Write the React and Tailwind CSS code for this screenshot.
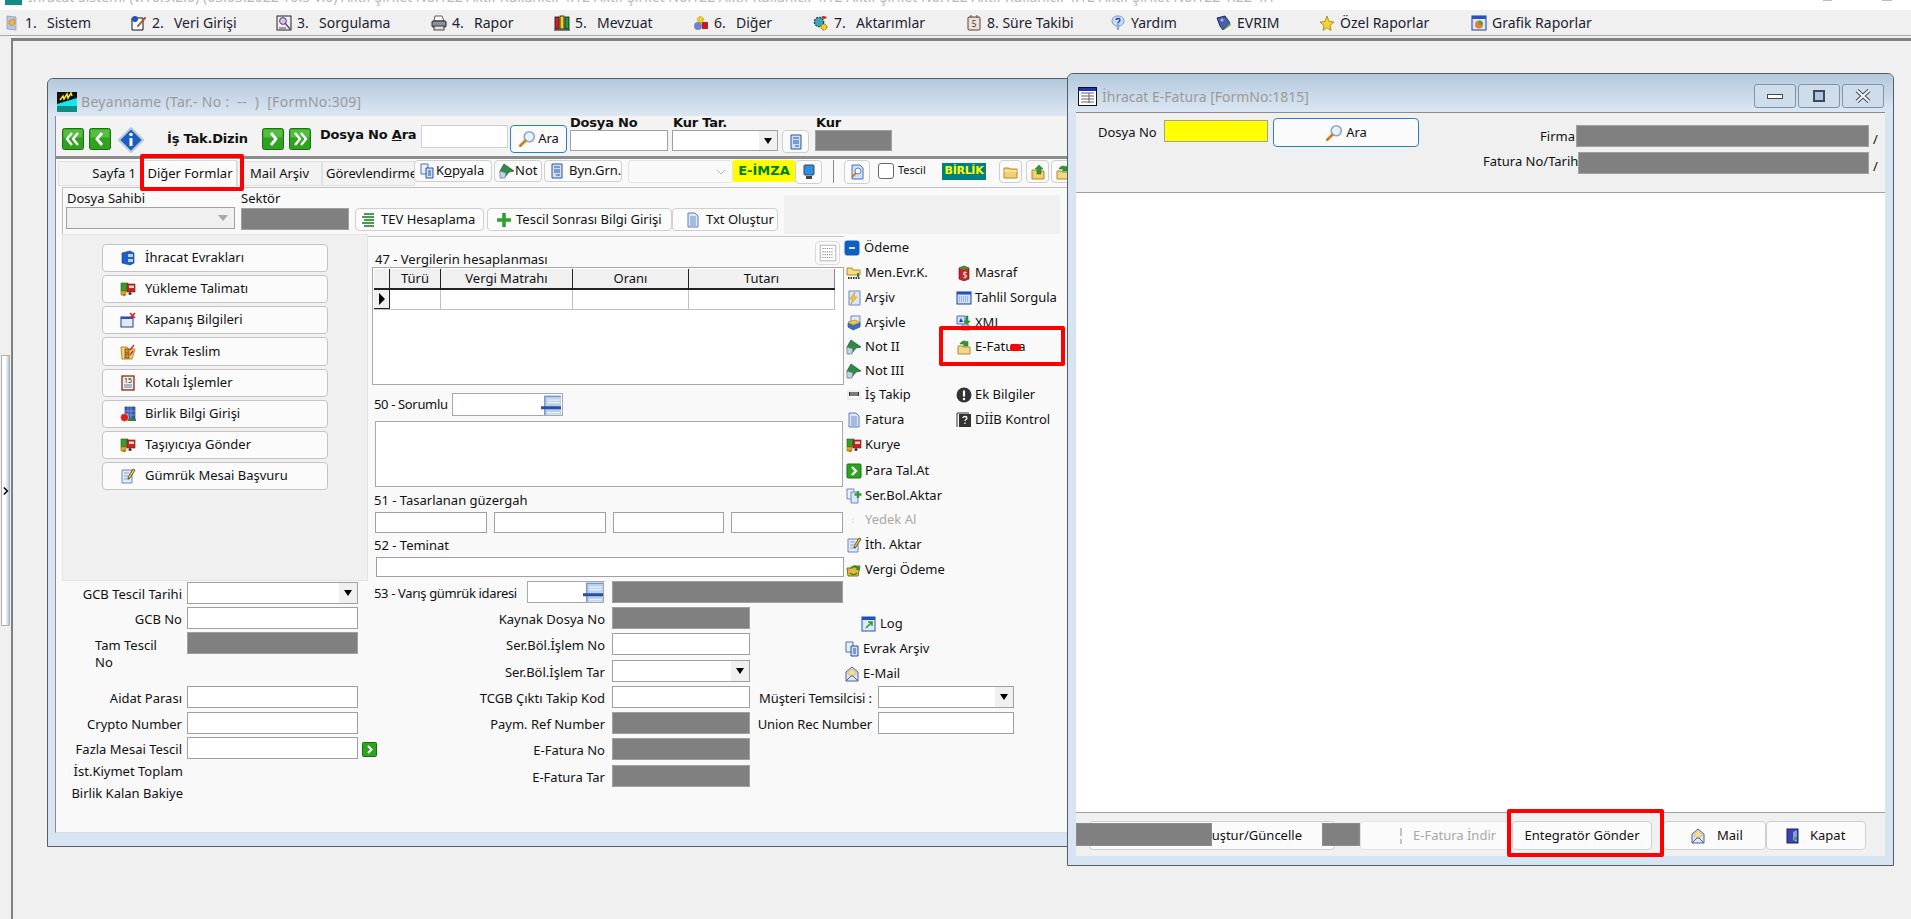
import React from "react";

const S = ({ children, s = 16, className = "" }) => (
  <svg width={s} height={s} viewBox="0 0 16 16" className={"shrink-0 " + className}>
    {children}
  </svg>
);

// small raster-like toolbar icons
const Docu = () => (
  <S>
    <path d="M3 1h7l3 3v11H3z" fill="#dbe6f6" stroke="#5f7fb8" />
    <path d="M5 5h6M5 7h6M5 9h6M5 11h6M5 13h6" stroke="#6f8fc8" />
  </S>
);
const DocBlue = () => (
  <S>
    <path d="M3 1h10v14H3z" fill="#cfe0f8" stroke="#2a50a0" />
    <path d="M5 4h6M5 7h6M5 9h6M7 12h4" stroke="#2a50a0" />
  </S>
);
const Folder = () => (
  <S>
    <path d="M1 4h5l1 1h7v9H1z" fill="#f2cf72" stroke="#b5882a" />
    <path d="M1 7h13" stroke="#fff2c0" />
  </S>
);
const FolderUp = () => (
  <S>
    <path d="M2 6h4l1 1h7v8H2z" fill="#f2cf72" stroke="#b5882a" />
    <path d="M9 1l4 4h-2v5H7V5H5z" fill="#2f9a2f" stroke="#1c6c1c" strokeWidth=".5" />
  </S>
);
const FolderArrow = () => (
  <S>
    <path d="M2 7h4l1 1h7v7H2z" fill="#f2d88a" stroke="#b5882a" />
    <path d="M4 5c1-3 5-4 7-2l1-1v5H7l2-1c-1-1-3-1-5-1z" fill="#2f9a2f" stroke="#1c6c1c" strokeWidth=".5" />
  </S>
);
const Book = () => (
  <S>
    <path d="M1 8l4-7 10 7-5 1-4 5-4 1z" fill="#2f8a4a" stroke="#17592b" strokeWidth=".7" />
    <path d="M1 8v7h5l1-5z" fill="#c3d3e3" stroke="#6c7f95" strokeWidth=".7" />
  </S>
);
const Copy = () => (
  <S>
    <path d="M2 1h7v10H2z" fill="#e8f0fb" stroke="#4a70b8" />
    <path d="M7 5h7v10H7z" fill="#cfe0f8" stroke="#2a50a0" />
    <path d="M9 8h3M9 10h3M9 12h3" stroke="#2a50a0" />
  </S>
);
const Mag = ({ s = 18 }) => (
  <S s={s}>
    <circle cx="10" cy="6" r="4.500" fill="#e4f0fb" stroke="#8da8c0" strokeWidth="1.400" />
    <path d="M6.500 9.500L2 14" stroke="#d27a1e" strokeWidth="2.400" strokeLinecap="round" />
  </S>
);
const Truck = () => (
  <S>
    <rect x="1" y="2" width="7" height="8" fill="#3b9a2c" stroke="#1e651a" strokeWidth=".6" />
    <rect x="7" y="3" width="8" height="8" fill="#c82420" stroke="#7e1512" strokeWidth=".6" />
    <rect x="9" y="4.500" width="5" height="2.500" fill="#f3d6d4" />
    <rect x="1" y="10" width="5" height="4" fill="#e0a82a" stroke="#96701a" strokeWidth=".6" />
    <circle cx="10" cy="12.500" r="1.500" fill="#333" />
    <circle cx="4" cy="14" r="1.200" fill="#a5761a" />
  </S>
);
const Mail = () => (
  <S>
    <path d="M2 6l6-5 6 5v9H2z" fill="#dbe6f6" stroke="#4a5f96" />
    <path d="M4 6l4-3 4 3v2l-4 2-4-2z" fill="#f3dc95" stroke="#c0a050" strokeWidth=".5" />
    <path d="M2 15l5-5h2l5 5" fill="none" stroke="#4a5f96" />
  </S>
);
const PenNote = () => (
  <S>
    <path d="M2 2h10v13H2z" fill="#dfe9f7" stroke="#6d89b6" />
    <path d="M4 5h5M4 8h4M4 11h6" stroke="#8ba3c6" />
    <path d="M13 1l2 1-5 8-2 1 .4-2.400z" fill="#f2d22a" stroke="#222" strokeWidth=".7" />
  </S>
);
const Lookup = () => (
  <S s={20}>
    <rect x="3" y="1" width="14" height="18" fill="#b9d1ee" stroke="#6f8fc0" />
    <path d="M5 4h10M5 6h10M5 14h10M5 16h10" stroke="#eef4fb" />
    <rect x="0" y="9" width="20" height="2.400" fill="#2c4fa0" />
  </S>
);
const GreenBtn = ({ kind, className = "" }) => (
  <svg width="22" height="22" viewBox="0 0 22 22" className={"shrink-0 " + className}>
    <rect x=".5" y=".5" width="21" height="21" rx="2" fill="#2fa31f" stroke="#1b7010" />
    <rect x="1.500" y="1.500" width="19" height="8" rx="1" fill="#6fce55" opacity=".6" />
    {kind === "l2" && <path d="M10 5l-5 6 5 6M16 5l-5 6 5 6" fill="none" stroke="#fff" strokeWidth="2.400" />}
    {kind === "l" && <path d="M13 5l-5 6 5 6" fill="none" stroke="#fff" strokeWidth="2.800" />}
    {kind === "r" && <path d="M9 5l5 6-5 6" fill="none" stroke="#fff" strokeWidth="2.800" />}
    {kind === "r2" && <path d="M6 5l5 6-5 6M12 5l5 6-5 6" fill="none" stroke="#fff" strokeWidth="2.400" />}
  </svg>
);
const Monitor = () => (
  <S>
    <rect x="3" y="1" width="10" height="10" rx="1" fill="#2a8fe8" stroke="#444" />
    <rect x="5" y="12" width="6" height="3" fill="#444" />
  </S>
);

const menuIcons = {
  sistem: (
    <S>
      <path d="M3 1l9 1v13l-9-1z" fill="#b9c8e0" stroke="#7a8cab" strokeWidth=".6" />
      <path d="M5 6l5-2 1 4-3 3-3-2z" fill="#f2b82e" stroke="#b27f14" strokeWidth=".6" />
    </S>
  ),
  veri: (
    <S>
      <path d="M1 3h11v12H1z" fill="#fff" stroke="#111" />
      <circle cx="4" cy="4" r="3" fill="#2a50c0" />
      <path d="M6 11L14 2l1 1-8 9z" fill="#c8622a" stroke="#6a2f10" strokeWidth=".5" />
    </S>
  ),
  sorgu: (
    <S>
      <rect x="1" y="1" width="14" height="14" fill="#eee" stroke="#222" />
      <circle cx="7" cy="6" r="3.400" fill="#d9c4e8" stroke="#5a3a7a" />
      <path d="M9 8l5 6M3 13h7" stroke="#5a3a7a" strokeWidth="1.200" />
    </S>
  ),
  rapor: (
    <S>
      <path d="M4 1h7l2 5H3z" fill="#fff" stroke="#333" strokeWidth=".8" />
      <rect x="1" y="6" width="14" height="6" rx="1" fill="#8c9296" stroke="#222" />
      <rect x="3" y="11" width="10" height="4" fill="#ddd" stroke="#222" strokeWidth=".8" />
    </S>
  ),
  mevzuat: (
    <S>
      <rect x="1" y="2" width="4" height="12" fill="#d82020" stroke="#111" strokeWidth=".8" />
      <rect x="6" y="1" width="4" height="13" fill="#f0d020" stroke="#111" strokeWidth=".8" />
      <rect x="11" y="2" width="4" height="12" fill="#20a040" stroke="#111" strokeWidth=".8" />
      <path d="M0 15h16" stroke="#111" />
    </S>
  ),
  diger: (
    <S>
      <path d="M7 1l4 3-2 4H6L4 4z" fill="#f2d020" stroke="#a58a10" strokeWidth=".5" />
      <rect x="9" y="7" width="6" height="7" fill="#c02020" />
      <circle cx="5" cy="11" r="4" fill="#7a80c8" />
    </S>
  ),
  aktar: (
    <S>
      <circle cx="6" cy="7" r="4.600" fill="#3aa8b8" stroke="#10505a" strokeWidth="1.400" strokeDasharray="2 1" />
      <path d="M8 2c2-2 5-1 6 1l-3 1z" fill="#d82020" />
      <circle cx="11" cy="12" r="3" fill="#f0d020" stroke="#6a5a10" strokeDasharray="1.400 .8" />
    </S>
  ),
  sure: (
    <S>
      <rect x="2" y="2" width="12" height="13" rx="1" fill="#e8e2dc" stroke="#6a3a34" />
      <path d="M5 0v3M11 0v3" stroke="#555" />
      <text x="8" y="12" fontSize="8" textAnchor="middle" fill="#333">5</text>
    </S>
  ),
  yardim: (
    <S>
      <path d="M8 1c4 0 6 2 6 5s-3 5-5 5l-1 4-1-4c-2 0-5-2-5-5s2-5 6-5z" fill="#c8dcf6" stroke="#7898c8" />
      <path d="M6 5c0-2 4-2 4 0 0 2-2 1.600-2 3.500M8 9.500v1" fill="none" stroke="#1e3f9a" strokeWidth="1.300" />
    </S>
  ),
  evrim: (
    <S>
      <path d="M1 3l8-2 5 7-7 7-3-4z" fill="#4a5fa8" stroke="#222a60" />
      <path d="M7 15l7-7 1 2-7 5z" fill="#6ab04a" />
      <circle cx="6" cy="5" r="1.500" fill="#9ac0f0" />
    </S>
  ),
  star: (
    <S>
      <path d="M8 1l2 5.500 5 .5-4 3.500 1 5-4-2.800L4 15.500l1-5-4-3.500 5-.5z" fill="#f6d432" stroke="#b8901a" />
    </S>
  ),
  grafik: (
    <S>
      <rect x="1" y="1" width="14" height="14" fill="#dfe8f8" stroke="#1e3f9a" />
      <rect x="1" y="1" width="14" height="3" fill="#2a50c0" />
      <circle cx="8" cy="9.500" r="4" fill="#e8802a" />
      <path d="M8 9.500V5.500a4 4 0 0 1 4 4z" fill="#3aa84a" />
    </S>
  ),
};

const menu = [
  { w: "w-[127px]", icon: menuIcons.sistem, n: "1.", t: "Sistem" },
  { w: "w-[145px]", icon: menuIcons.veri, n: "2.", t: "Veri Girişi" },
  { w: "w-[155px]", icon: menuIcons.sorgu, n: "3.", t: "Sorgulama" },
  { w: "w-[123px]", icon: menuIcons.rapor, n: "4.", t: "Rapor" },
  { w: "w-[139px]", icon: menuIcons.mevzuat, n: "5.", t: "Mevzuat" },
  { w: "w-[120px]", icon: menuIcons.diger, n: "6.", t: "Diğer" },
  { w: "w-[153px]", icon: menuIcons.aktar, n: "7.", t: "Aktarımlar" },
  { w: "w-[144px]", icon: menuIcons.sure, t: "8. Süre Takibi" },
  { w: "w-[106px]", icon: menuIcons.yardim, t: "Yardım" },
  { w: "w-[103px]", icon: menuIcons.evrim, t: "EVRIM" },
  { w: "w-[152px]", icon: menuIcons.star, t: "Özel Raporlar" },
  { w: "w-[130px]", icon: menuIcons.grafik, t: "Grafik Raporlar" },
];

const Input = ({ className = "" }) => <div className={"h-[22px] bg-white border border-[#a0a0a0] shrink-0 " + className} />;
const Gray = ({ className = "" }) => <div className={"h-[22px] bg-[#808080] border border-[#a0a0a0] shrink-0 " + className} />;
const Combo = ({ className = "" }) => (
  <div className={"h-[22px] bg-white border border-[#a0a0a0] shrink-0 flex justify-end " + className}>
    <div className="w-[18px] bg-[#f0f0f0] flex items-center justify-center">
      <div className="w-0 h-0 border-x-[4px] border-x-transparent border-t-[6px] border-t-black" />
    </div>
  </div>
);
const Btn = ({ children, className = "" }) => (
  <div className={"flex items-center bg-[#fbfbfb] border border-[#cfcfcf] rounded-[4px] shrink-0 " + className}>{children}</div>
);

const sideButtons = [
  { h: "h-[28px]", icon: (
    <S>
      <path d="M2 3l8-2 4 2v10l-4 2-8-2z" fill="#1e5fc8" stroke="#123a80" strokeWidth=".6" />
      <rect x="8" y="4" width="5" height="3" fill="#b8d0f0" /><rect x="8" y="9" width="5" height="3" fill="#b8d0f0" />
    </S>
  ), t: "İhracat Evrakları" },
  { h: "h-[28px]", icon: <Truck />, t: "Yükleme Talimatı" },
  { h: "h-[28px]", icon: (
    <S>
      <rect x="1" y="5" width="12" height="10" fill="#dfeafa" stroke="#1e3f9a" />
      <rect x="1" y="5" width="12" height="2" fill="#2a50c0" />
      <path d="M10 1l5 5M15 1l-5 5" stroke="#d82020" strokeWidth="1.600" />
    </S>
  ), t: "Kapanış Bilgileri" },
  { h: "h-[29px]", icon: (
    <S>
      <path d="M1 3h6l1 2h7l-3 10H2z" fill="#f4d468" stroke="#b5882a" />
      <rect x="5" y="5" width="4" height="4" fill="#e8841e" stroke="#333" strokeWidth=".6" />
      <rect x="5" y="10" width="4" height="4" fill="#e8841e" stroke="#333" strokeWidth=".6" />
      <path d="M10 6l4-5M10 11l3-4" stroke="#d82020" strokeWidth="1.300" />
    </S>
  ), t: "Evrak Teslim" },
  { h: "h-[28px]", icon: (
    <S>
      <rect x="2" y="1" width="12" height="14" fill="#f3ece4" stroke="#8a3a2a" strokeWidth="1.400" />
      <text x="8" y="8" fontSize="7" textAnchor="middle" fill="#222">15</text>
      <path d="M4 10h8M4 12h8" stroke="#6a80a8" />
    </S>
  ), t: "Kotalı İşlemler" },
  { h: "h-[28px]", icon: (
    <S>
      <rect x="5" y="1" width="10" height="12" fill="#3a5ab0" stroke="#1e2f70" strokeWidth=".6" />
      <path d="M8 1v12M11 1v12M5 5h10M5 9h10" stroke="#8aa8e0" strokeWidth=".7" />
      <path d="M6 13h10v2H6z" fill="#2a8a2a" />
      <circle cx="4.500" cy="11.500" r="4" fill="#d82020" stroke="#fff" strokeWidth=".5" />
    </S>
  ), t: "Birlik Bilgi Girişi" },
  { h: "h-[28px]", icon: <Truck />, t: "Taşıyıcıya Gönder" },
  { h: "h-[28px]", icon: <PenNote />, t: "Gümrük Mesai Başvuru" },
];

const LabelRow = ({ label, children }) => (
  <div className="flex items-start h-[22px]">
    <span className="w-[121px] h-[22px] leading-[25px] shrink-0 text-right pr-[1px] whitespace-nowrap">{label}</span>
    {children}
  </div>
);
const MidRow = ({ label, field, extra, className = "" }) => (
  <div className={"flex items-start w-max h-[22px] " + className}>
    <span className="w-[237px] h-[22px] leading-[25px] shrink-0 text-right whitespace-nowrap">{label}</span>
    <div className="ml-[7px] w-[138px]">{field}</div>
    {extra}
  </div>
);

const Tool = ({ icon, t, h, gray = false, className = "" }) => (
  <div className={"flex items-center shrink-0 " + h + " " + className}>
    {icon}
    <span className={"ml-[3px] whitespace-nowrap " + (gray ? "text-[#a8a8a8]" : "")}>{t}</span>
  </div>
);

const leftTools = [
  { h: "h-[25px]", t: "Men.Evr.K.", icon: (
    <S>
      <path d="M1 3h5l1 2h7v5H1z" fill="#f6dc80" stroke="#b5882a" />
      <path d="M2 13h12" stroke="#333" strokeWidth="2" strokeDasharray="1.500 1" />
      <path d="M12 8v4" stroke="#2a8a2a" strokeWidth="2" />
    </S>
  ), side: { t: "Masraf", icon: (
    <S>
      <path d="M3 3l5-2 5 2v11l-5 2-5-2z" fill="#c82420" stroke="#5a1010" strokeWidth=".6" />
      <path d="M3 3l5-2 5 2-5 2z" fill="#3a9a2c" />
      <text x="9" y="13" fontSize="8" textAnchor="middle" fill="#fff">$</text>
    </S>
  ) } },
  { h: "h-[25px]", t: "Arşiv", icon: (
    <S>
      <path d="M3 1h11v14H3z" fill="#dbe6f6" stroke="#6d89b6" />
      <path d="M9 2L4 9h3l-2 5 6-7H8z" fill="#f2d020" stroke="#c0801a" strokeWidth=".5" />
    </S>
  ), side: { t: "Tahlil Sorgula", icon: (
    <S>
      <rect x="1" y="2" width="14" height="12" fill="#cfe0f8" stroke="#1e3f9a" />
      <rect x="1" y="2" width="14" height="2.500" fill="#1e50c0" />
      <path d="M3 7h10M3 9h10M3 11h10" stroke="#6f8fc8" strokeDasharray="1 1" />
    </S>
  ) } },
  { h: "h-[25px]", t: "Arşivle", icon: (
    <S>
      <path d="M5 1h9v9H5z" fill="#e4ecf8" stroke="#6d89b6" />
      <path d="M2 7l7-2 5 2-7 3z" fill="#f2c84a" stroke="#a5801a" strokeWidth=".6" />
      <path d="M2 8l5 3 7-3v4l-7 3-5-3z" fill="#3a70c8" stroke="#1e3f80" strokeWidth=".6" />
    </S>
  ), side: { t: "XML", icon: (
    <S>
      <path d="M1 1h8v8H1z" fill="#cfe0f8" stroke="#4a70b8" />
      <path d="M3 7l2-4 2 4z" fill="#1e3f9a" />
      <path d="M10 1v5H8l3 4 3-4h-2V1z" fill="#2f9a2f" stroke="#1c6c1c" strokeWidth=".5" />
      <rect x="6" y="10" width="7" height="5" fill="#dbe6f6" stroke="#6d89b6" />
    </S>
  ) } },
  { h: "h-[24px]", t: "Not II", icon: <Book />, side: { t: "E-Fatura", icon: <FolderArrow /> } },
  { h: "h-[23px]", t: "Not III", icon: <Book /> },
  { h: "h-[25px]", t: "İş Takip", icon: (
    <S>
      <rect x="2" y="4" width="12" height="8" fill="#fff" stroke="#ccc" strokeWidth=".6" />
      <path d="M3 5h10v4H3z" fill="#333" />
      <path d="M5 5v4M7 5v4M9 5v4M11 5v4" stroke="#fff" strokeWidth=".7" />
    </S>
  ), side: { t: "Ek Bilgiler", icon: (
    <S>
      <circle cx="8" cy="8" r="7.500" fill="#333" />
      <path d="M8 3.500v6" stroke="#fff" strokeWidth="2.200" />
      <circle cx="8" cy="12" r="1.200" fill="#fff" />
    </S>
  ) } },
  { h: "h-[25px]", t: "Fatura", icon: <Docu />, side: { t: "DİİB Kontrol", icon: (
    <S>
      <rect x="3" y="2" width="12" height="13" fill="#333" />
      <path d="M1 1h12M1 1v14" stroke="#333" fill="none" />
      <path d="M7 6c0-2 4-2 4 0 0 1.500-2 1.500-2 3M9 10.500v1.500" fill="none" stroke="#fff" strokeWidth="1.300" />
    </S>
  ) } },
  { h: "h-[26px]", t: "Kurye", icon: <Truck /> },
  { h: "h-[26px]", t: "Para Tal.At", icon: (
    <S>
      <rect x="1" y="1" width="14" height="14" rx="1" fill="#2fa31f" stroke="#1b7010" />
      <path d="M6 4l4 4-4 4" fill="none" stroke="#fff" strokeWidth="2.200" />
    </S>
  ) },
  { h: "h-[23px]", t: "Ser.Bol.Aktar", icon: (
    <S>
      <path d="M1 1h7v10H1z" fill="#e8f0fb" stroke="#6d89b6" />
      <path d="M5 4h7v11H5z" fill="#dbe6f6" stroke="#6d89b6" />
      <path d="M12 3v7M8.500 6.500h7" stroke="#2f9a3f" strokeWidth="2.400" />
    </S>
  ) },
  { h: "h-[25px]", t: "Yedek Al", gray: true, icon: (
    <S>
      <path d="M7 6.500v1.200M7 9.500v1.200" stroke="#b8b8b8" />
    </S>
  ) },
  { h: "h-[25px]", t: "İth. Aktar", icon: <PenNote /> },
  { h: "h-[25px]", t: "Vergi Ödeme", icon: (
    <S>
      <path d="M1 6h6l1-2h6l-2 10H2z" fill="#e8b83a" stroke="#8a6a14" />
      <path d="M3 8c2-3 6-3 8-1l-2 1h5l-1-4-1 1c-3-3-8-1-9 3z" fill="#2f8a2f" />
      <path d="M4 11c2 2 5 2 7 0" stroke="#2f8a2f" strokeWidth="1.600" fill="none" />
    </S>
  ) },
];

const boldLabel = "font-['DejaVu_Sans'] font-bold text-[13px] tracking-[-.2px] text-[#111]";

const Beyanname = () => (
  <div className="absolute left-[47px] top-[78px] w-[1040px] h-[769px] border border-[#555d66] rounded-t-md bg-[#d7e4f2] flex flex-col">
    {/* title */}
    <div className="h-[37px] shrink-0 flex items-center pl-[9px] pt-[8px] rounded-t-md bg-gradient-to-b from-[#b4c8dc] to-[#dbe7f3] text-[14px] text-[#9a9a9a] tracking-[.3px]">
      <svg width="20" height="20" viewBox="0 0 20 20" className="shrink-0">
        <rect width="20" height="14" fill="#111" />
        <path d="M0 12L20 6v8H0z" fill="#14e6f0" />
        <rect y="14" width="20" height="6" fill="#0f8c84" />
        <path d="M3 8l3-4 1 3 3-5 1 4 3-5 1 3" fill="none" stroke="#f6e62a" strokeWidth="1.500" />
      </svg>
      <span className="ml-[4px] whitespace-pre">Beyanname (Tar.- No :  --  )  [FormNo:309]</span>
    </div>
    <div className="ml-[7px] h-[717px] shrink-0 bg-[#f9f9f9] border-l border-b border-l-[#8c8c8c] border-b-[#dcdcdc] flex flex-col">
      {/* toolbar */}
      <div className="h-[40px] shrink-0 bg-[#f3f3f3] flex items-start pl-[6px]">
        <GreenBtn kind="l2" className="mt-[12px]" />
        <GreenBtn kind="l" className="mt-[12px] ml-[5px]" />
        <svg width="26" height="26" viewBox="0 0 26 26" className="mt-[11px] ml-[7px] shrink-0">
          <path d="M13 1l12 12-12 12L1 13z" fill="#1a5cc0" stroke="#b8c8e0" strokeWidth="2" />
          <circle cx="13" cy="7.500" r="1.800" fill="#fff" />
          <path d="M13 11v8" stroke="#fff" strokeWidth="3" />
        </svg>
        <span className={"mt-[13px] ml-[23px] w-[95px] whitespace-nowrap " + boldLabel}>İş Tak.Dizin</span>
        <GreenBtn kind="r" className="mt-[12px]" />
        <GreenBtn kind="r2" className="mt-[12px] ml-[5px]" />
        <span className={"mt-[9px] ml-[9px] w-[101px] whitespace-nowrap " + boldLabel}>Dosya No <u>A</u>ra</span>
        <div className="mt-[9px] w-[87px] h-[23px] bg-white border border-[#d0d0d0] shrink-0" />
        <Btn className="mt-[9px] ml-[2px] w-[57px] h-[28px] !border-[#2a80c8] justify-center">
          <Mag />
          <span className="ml-[2px]">Ara</span>
        </Btn>
        <div className="ml-[3px] w-[98px] shrink-0">
          <div className={"h-[14px] leading-[14px] whitespace-nowrap " + boldLabel}>Dosya No</div>
          <Input className="w-[98px] !h-[21px]" />
        </div>
        <div className="ml-[4px] w-[106px] shrink-0">
          <div className={"h-[14px] leading-[14px] pl-[1px] " + boldLabel}>Kur Tar.</div>
          <Combo className="w-[106px] !h-[21px]" />
        </div>
        <Btn className="mt-[14px] ml-[4px] w-[27px] h-[23px] justify-center">
          <DocBlue />
        </Btn>
        <div className="ml-[6px] w-[77px] shrink-0">
          <div className={"h-[14px] leading-[14px] pl-[1px] " + boldLabel}>Kur</div>
          <Gray className="w-[77px] !h-[21px]" />
        </div>
      </div>
      {/* tabs */}
      <div className="h-[31px] shrink-0 border-t-[3px] border-[#8c8c8c] flex items-start pl-[2px] pt-[1px] bg-[#f9f9f9]">
        <div className="w-[85px] h-[25px] mt-[1px] bg-[#f3f3f3] border border-[#e0e0e0] flex items-center justify-end pr-[6px]">Sayfa 1</div>
        <div className="w-[94px] h-[26px] bg-[#fafafa] border border-[#d8d8d8] border-b-0 flex items-center justify-center">Diğer Formlar</div>
        <div className="w-[85px] h-[25px] mt-[1px] bg-[#f3f3f3] border border-[#e0e0e0] flex items-center justify-center">Mail Arşiv</div>
        <div className="w-[93px] h-[25px] mt-[1px] pl-[3px] bg-[#f3f3f3] border border-[#e0e0e0] overflow-hidden whitespace-nowrap flex items-center">Görevlendirme</div>
        <Btn className="w-[78px] h-[22px] -ml-[1px] pl-[4px]"><Copy /><span className="ml-[1px]">K<u>o</u>pyala</span></Btn>
        <Btn className="w-[48px] h-[22px] ml-[2px] pl-[4px]"><Book /><span>Not</span></Btn>
        <Btn className="w-[78px] h-[22px] ml-[2px] pl-[4px]"><DocBlue /><span className="ml-[4px]">Byn.Grn.</span></Btn>
        <div className="w-[105px] h-[23px] ml-[6px] bg-[#f9f9f9] border border-[#e4e4e4] rounded-[3px] flex items-center justify-end pr-[6px]">
          <svg width="10" height="6" viewBox="0 0 10 6"><path d="M1 1l4 4 4-4" fill="none" stroke="#b8b8b8" /></svg>
        </div>
        <div className="w-[62px] h-[22px] bg-[#ffff00] text-[#008000] flex items-center justify-center font-['DejaVu_Sans'] font-bold text-[13px]">E-İMZA</div>
        <Btn className="w-[27px] h-[24px] justify-center"><Monitor /></Btn>
        <div className="w-px h-[23px] ml-[11px] bg-[#888] shrink-0" />
        <Btn className="w-[26px] h-[24px] ml-[10px] justify-center">
          <S>
            <path d="M3 1h8l3 3v11H3z" fill="#cfe0f8" stroke="#4a70b8" />
            <circle cx="9" cy="7" r="3" fill="#f4f8fd" stroke="#5a80b8" />
            <path d="M7 9l-4 4" stroke="#d27a1e" strokeWidth="2" />
          </S>
        </Btn>
        <div className="w-[16px] h-[16px] ml-[8px] mt-[3px] bg-white border border-[#666] rounded-[3px] shrink-0" />
        <span className="ml-[4px] mt-[2px] w-[44px] text-[11px]">Tescil</span>
        <div className="w-[44px] h-[17px] mt-[3px] bg-[#008080] text-[#ffff00] flex items-center justify-center font-['DejaVu_Sans'] font-bold text-[11px] tracking-[-.3px] shrink-0">BİRLİK</div>
        <Btn className="w-[23px] h-[23px] ml-[13px] justify-center"><Folder /></Btn>
        <Btn className="w-[23px] h-[23px] ml-[4px] justify-center"><FolderUp /></Btn>
        <Btn className="w-[23px] h-[23px] ml-[2px] justify-center"><FolderArrow /></Btn>
      </div>
      {/* header of page */}
      <div className="h-[47px] shrink-0 ml-[6px] border-t border-l border-[#c0c0c0] flex items-start bg-[#f9f9f9]">
        <div className="ml-[3px] w-[169px] shrink-0">
          <div className="h-[19px] leading-[20px] pl-[1px]">Dosya Sahibi</div>
          <div className="h-[22px] bg-[#f0f0f0] border border-[#a0a0a0] flex items-center justify-end pr-[6px]">
            <div className="w-0 h-0 border-x-[5px] border-x-transparent border-t-[6px] border-t-[#a8a8a8]" />
          </div>
        </div>
        <div className="ml-[6px] w-[108px] shrink-0">
          <div className="h-[20px] leading-[20px]">Sektör</div>
          <Gray className="w-[108px]" />
        </div>
        <Btn className="mt-[20px] ml-[6px] w-[129px] h-[23px] pl-[5px]">
          <svg width="16" height="16" viewBox="0 0 16 16" className="shrink-0"><path d="M3 2h10M1 5h12M3 8h10M1 11h12M3 14h10" stroke="#4a9a50" strokeWidth="1.800" /></svg>
          <span className="ml-[4px] whitespace-nowrap">TEV Hesaplama</span>
        </Btn>
        <Btn className="mt-[20px] ml-[3px] w-[185px] h-[23px] pl-[8px]">
          <svg width="16" height="16" viewBox="0 0 16 16" className="shrink-0"><path d="M8 1v14M1 8h14" stroke="#2fa02f" strokeWidth="3.600" /></svg>
          <span className="ml-[4px] whitespace-nowrap">Tescil Sonrası Bilgi Girişi</span>
        </Btn>
        <Btn className="mt-[20px] w-[106px] h-[23px] pl-[12px]">
          <Docu />
          <span className="ml-[5px] whitespace-nowrap">Txt Oluştur</span>
        </Btn>
        <div className="mt-[7px] ml-[6px] w-[276px] h-[39px] bg-[#f0f0f0] shrink-0" />
      </div>
      {/* body */}
      <div className="flex flex-1 ml-[6px] items-start min-h-0">
        <div className="w-[306px] shrink-0">
          <div className="h-[347px] bg-[#f0f0f0] border border-[#e4e4e4] pt-[9px] pl-[39px] flex flex-col gap-[3px]">
            {sideButtons.map((b) => (
              <Btn key={b.t} className={"w-[226px] pl-[17px] !border-[#c4c4c4] " + b.h}>
                {b.icon}
                <span className="ml-[9px] whitespace-nowrap">{b.t}</span>
              </Btn>
            ))}
          </div>
          <div className="flex flex-col">
            <div className="mt-[1px]">
              <LabelRow label="GCB Tescil Tarihi"><Combo className="ml-[4px] w-[171px]" /></LabelRow>
            </div>
            <div className="mt-[3px]">
              <LabelRow label="GCB No"><Input className="ml-[4px] w-[171px]" /></LabelRow>
            </div>
            <div className="mt-[3px] h-[22px] flex items-start">
              <span className="w-[121px] shrink-0 pl-[33px] pt-[5px] leading-[17px]">Tam Tescil<br />No</span>
              <Gray className="ml-[4px] w-[171px]" />
            </div>
            <div className="mt-[32px]">
              <LabelRow label="Aidat Parası"><Input className="ml-[4px] w-[171px]" /></LabelRow>
            </div>
            <div className="mt-[4px]">
              <LabelRow label="Crypto Number"><Input className="ml-[4px] w-[171px]" /></LabelRow>
            </div>
            <div className="mt-[3px]">
              <LabelRow label="Fazla Mesai Tescil">
                <Input className="ml-[4px] w-[171px]" />
                <svg width="15" height="15" viewBox="0 0 15 15" className="ml-[4px] mt-[5px] shrink-0">
                  <rect x=".5" y=".5" width="14" height="14" rx="1" fill="#2fa31f" stroke="#1b7010" />
                  <path d="M6 4l3.500 3.500L6 11" fill="none" stroke="#fff" strokeWidth="2" />
                </svg>
              </LabelRow>
            </div>
            <div className="mt-[2px] h-[20px] leading-[20px] w-[121px] text-right whitespace-nowrap">İst.Kiymet Toplam</div>
            <div className="mt-[1px] h-[22px] leading-[22px] w-[121px] text-right whitespace-nowrap">Birlik Kalan Bakiye</div>
          </div>
        </div>
        {/* middle */}
        <div className="w-[476px] shrink-0 pt-[2px]">
          <div className="h-[29px] border-t border-[#c8c8c8] flex items-end justify-between pl-[7px] pr-[4px]">
            <span className="leading-[16px] mb-[-2px]">47 - Vergilerin hesaplanması</span>
            <div className="w-[25px] h-[24px] bg-[#fbfbfb] border border-[#dcdcdc] rounded-[4px] flex items-center justify-center">
              <svg width="20" height="20" viewBox="0 0 18 18"><rect x="2" y="2" width="14" height="14" fill="#fff" stroke="#bbb" /><path d="M4 5h10M4 8h10M4 10.500h10M4 13h10" stroke="#888" strokeDasharray="1 1" /></svg>
            </div>
          </div>
          <div className="mt-[2px] ml-[4px] w-[472px] h-[118px] bg-white border border-[#a8a8a8] pt-[1px] pl-px">
            <div className="flex h-[21px] bg-[#f0f0f0] border-b-2 border-[#222] w-[461px] text-center leading-[19px]">
              <div className="w-[16px] border-r border-[#222]" />
              <div className="w-[51px] border-r border-[#222]">Türü</div>
              <div className="w-[132px] border-r border-[#222]">Vergi Matrahı</div>
              <div className="w-[116px] border-r border-[#222]">Oranı</div>
              <div className="flex-1 border-r border-[#888]">Tutarı</div>
            </div>
            <div className="flex h-[20px] w-[461px] border-b border-[#c0c0c0]">
              <div className="w-[16px] bg-[#f0f0f0] border-r border-b border-[#222] flex items-center justify-center">
                <div className="w-0 h-0 border-y-[6px] border-y-transparent border-l-[6px] border-l-black" />
              </div>
              <div className="w-[51px] border-r border-[#c0c0c0]" />
              <div className="w-[132px] border-r border-[#c0c0c0]" />
              <div className="w-[116px] border-r border-[#c0c0c0]" />
              <div className="flex-1 border-r border-[#c0c0c0]" />
            </div>
          </div>
          <div className="mt-[8px] h-[23px] flex items-center pl-[6px]">
            <span className="w-[78px] shrink-0 whitespace-nowrap tracking-[-.35px]">50 - Sorumlu</span>
            <div className="w-[111px] h-[23px] bg-white border border-[#a8a8a8] flex items-center justify-end pr-[1px]"><Lookup /></div>
          </div>
          <div className="mt-[5px] ml-[7px] w-[468px] h-[66px] bg-white border border-[#a8a8a8]" />
          <div className="mt-[3px] h-[20px] leading-[20px] pl-[6px] mb-[2px]">51 - Tasarlanan güzergah</div>
          <div className="flex ml-[7px] w-[468px] gap-[7px]">
            <Input className="flex-1 !h-[21px]" />
            <Input className="flex-1 !h-[21px]" />
            <Input className="flex-1 !h-[21px]" />
            <Input className="flex-1 !h-[21px]" />
          </div>
          <div className="mt-[2px] h-[20px] leading-[20px] pl-[6px]">52 - Teminat</div>
          <Input className="mt-[2px] ml-[8px] w-[468px] !h-[20px]" />
          <div className="mt-[4px] h-[22px] flex items-start pl-[6px]">
            <span className="w-[153px] h-[22px] leading-[25px] shrink-0 whitespace-nowrap tracking-[-.35px]">53 - Varış gümrük idaresi</span>
            <div className="w-[77px] h-[22px] bg-white border border-[#a8a8a8] flex items-center justify-end"><Lookup /></div>
            <Gray className="ml-[8px] w-[231px]" />
          </div>
          <MidRow className="mt-[4px]" label="Kaynak Dosya No" field={<Gray />} />
          <MidRow className="mt-[4px]" label="Ser.Böl.İşlem No" field={<Input />} />
          <MidRow className="mt-[5px]" label="Ser.Böl.İşlem Tar" field={<Combo />} />
          <MidRow
            className="mt-[4px]"
            label="TCGB Çıktı Takip Kod"
            field={<Input />}
            extra={
              <>
                <span className="w-[122px] h-[22px] leading-[25px] text-right shrink-0 whitespace-nowrap tracking-[-.1px]">Müşteri Temsilcisi :</span>
                <Combo className="ml-[6px] w-[136px]" />
              </>
            }
          />
          <MidRow
            className="mt-[4px]"
            label="Paym. Ref Number"
            field={<Gray />}
            extra={
              <>
                <span className="w-[122px] h-[22px] leading-[25px] text-right shrink-0 whitespace-nowrap tracking-[-.1px]">Union Rec Number</span>
                <Input className="ml-[6px] w-[136px]" />
              </>
            }
          />
          <MidRow className="mt-[4px]" label="E-Fatura No" field={<Gray />} />
          <MidRow className="mt-[5px]" label="E-Fatura Tar" field={<Gray />} />
        </div>
        {/* right tools */}
        <div className="flex-1 pt-[2px]">
          <div className="h-[24px] flex items-center">
            <S><rect x=".5" y=".5" width="15" height="15" rx="3" fill="#0f5fc0" /><path d="M5 8h6" stroke="#cfe0f8" strokeWidth="2" /></S>
            <span className="ml-[4px]">Ödeme</span>
          </div>
          {leftTools.map((r) => (
            <div key={r.t} className={"flex items-center pl-[2px] " + r.h}>
              <div className="w-[110px] shrink-0">
                <Tool icon={r.icon} t={r.t} h="h-[20px]" gray={r.gray} />
              </div>
              {r.side && <Tool icon={r.side.icon} t={r.side.t} h="h-[20px]" />}
            </div>
          ))}
          <Tool className="mt-[29px] pl-[17px]" h="h-[25px]" icon={
            <S>
              <rect x="1" y="1" width="13" height="14" fill="#dfeafa" stroke="#1e50c0" />
              <rect x="1" y="1" width="13" height="3" fill="#1e50c0" />
              <path d="M5 12l5-5M7 6h4v4" fill="none" stroke="#2f9a2f" strokeWidth="1.600" />
            </S>
          } t="Log" />
          <Tool h="h-[25px]" icon={<Copy />} t="Evrak Arşiv" />
          <Tool h="h-[25px]" icon={<Mail />} t="E-Mail" />
        </div>
      </div>
    </div>
  </div>
);

const EFatura = () => (
  <div className="absolute left-[1067px] top-[73px] w-[827px] h-[793px] border border-[#555d66] rounded-t-md bg-[#d7e4f2] flex flex-col">
    <div className="h-[38px] shrink-0 flex items-start pl-[10px] rounded-t-md bg-gradient-to-b from-[#b4c8dc] to-[#dbe7f3]">
      <svg width="19" height="19" viewBox="0 0 19 19" className="mt-[13px] shrink-0">
        <rect x=".5" y=".5" width="18" height="18" fill="#fff" stroke="#111" />
        <rect x="1" y="1" width="17" height="3" fill="#2030c0" />
        <path d="M3 6h13M3 9h13M3 12h13M3 15h13M11 6v10" stroke="#666" />
      </svg>
      <span className="mt-[13px] ml-[5px] text-[14px] leading-[20px] text-[#9a9a9a]">İhracat E-Fatura [FormNo:1815]</span>
      <div className="ml-auto mr-[9px] mt-[10px] flex gap-[2px]">
        <div className="w-[42px] h-[24px] border border-[#7e94ac] rounded-[3px] bg-[#cfdcea] flex items-center justify-center">
          <div className="w-[16px] h-[5px] bg-white border border-[#3a4a5a]" />
        </div>
        <div className="w-[42px] h-[24px] border border-[#7e94ac] rounded-[3px] bg-[#cfdcea] flex items-center justify-center">
          <div className="w-[12px] h-[12px] bg-[#b0c4da] border-2 border-[#3a4a5a]" />
        </div>
        <div className="w-[42px] h-[24px] border border-[#7e94ac] rounded-[3px] bg-[#cfdcea] flex items-center justify-center">
          <svg width="18" height="14" viewBox="0 0 18 14"><path d="M3 1.500l12 11M15 1.500l-12 11" stroke="#3a4a5a" strokeWidth="4" /><path d="M3 1.500l12 11M15 1.500l-12 11" stroke="#fff" strokeWidth="2" /></svg>
        </div>
      </div>
    </div>
    <div className="mx-[8px] flex flex-col h-[744px] shrink-0 bg-[#f0f0f0]">
      <div className="h-[81px] shrink-0 border-t border-[#8c8c8c] border-b-[1px] border-b-[#a0a0a0] flex items-start pl-[22px] relative">
        <span className="mt-[10px] w-[66px] shrink-0 whitespace-nowrap">Dosya No</span>
        <div className="mt-[7px] w-[104px] h-[22px] bg-[#ffff00] border border-[#a0a0a0] shrink-0" />
        <Btn className="mt-[5px] ml-[5px] w-[146px] h-[29px] !border-[#2a80c8] justify-center">
          <Mag />
          <span className="ml-[3px]">Ara</span>
        </Btn>
        <div className="ml-auto mr-[2px] w-[400px] shrink-0">
          <div className="mt-[12px] flex items-start">
            <span className="w-[92px] text-right shrink-0 pt-[2px]">Firma</span>
            <Gray className="ml-[1px] w-[293px]" />
            <span className="ml-[4px] pt-[6px] leading-[16px]">/</span>
          </div>
          <div className="mt-[5px] flex items-start">
            <span className="w-[92px] text-right shrink-0 whitespace-nowrap">Fatura No/Tarih</span>
            <Gray className="ml-[3px] w-[291px]" />
            <span className="ml-[4px] pt-[6px] leading-[16px]">/</span>
          </div>
        </div>
      </div>
      <div className="h-[619px] shrink-0 bg-white" />
      <div className="flex-1 border-t border-[#a0a0a0] pt-[8px] pl-[13px] flex items-start relative">
        <Btn className="w-[246px] h-[29px] justify-end pr-[32px]"><span className="whitespace-nowrap">E-Fatura Oluştur/Güncelle</span></Btn>
        <Btn className="ml-[25px] w-[152px] h-[29px] !border-[#e2e2e2] pl-[39px]">
          <svg width="2" height="16" viewBox="0 0 2 16" className="shrink-0"><path d="M1 0v8M1 11v5" stroke="#b0b0b0" strokeWidth="1.500" /></svg>
          <span className="ml-[11px] text-[#a8a8a8] whitespace-nowrap">E-Fatura İndir</span>
        </Btn>
        <Btn className="w-[140px] h-[29px] justify-center"><span className="whitespace-nowrap">Entegratör Gönder</span></Btn>
        <Btn className="ml-[11px] w-[103px] h-[29px] pl-[26px]">
          <Mail />
          <span className="ml-[11px]">Mail</span>
        </Btn>
        <Btn className="w-[100px] h-[29px] pl-[18px]">
          <S>
            <rect x="2" y="1" width="11" height="14" fill="#3a44b0" stroke="#1a2060" />
            <path d="M8 4v8l4 2V2z" fill="#8a98e0" />
            <rect x="9" y="9" width="3" height="3" fill="#30b030" />
          </S>
          <span className="ml-[9px]">Kapat</span>
        </Btn>
        {/* redaction blocks */}
        <div className="absolute left-0 top-[10px] w-[136px] h-[23px] bg-[#808080] border border-[#8c8c8c]" />
        <div className="absolute left-[246px] top-[10px] w-[38px] h-[23px] bg-[#808080] border border-[#8c8c8c]" />
      </div>
    </div>
  </div>
);

export default function App() {
  return (
    <div className="relative w-full h-[919px] overflow-hidden bg-[#f0f0f0] font-['Noto_Sans',sans-serif] text-[13px] text-[#111]">
      {/* window caption, cut by the top of the screen */}
      <div className="h-[10px] bg-white overflow-hidden flex items-end relative">
        <div className="absolute left-[5px] top-0 w-[17px] h-[5px] bg-[#0f8c84]" />
        <span className="absolute left-[28px] -top-[11px] text-[14px] leading-[16px] text-[#b8b8b8] whitespace-nowrap">İhracat Sistemi (v.10.9.2.0) (03.03.2022 10:5 V.0) Aktif Şirket No:122 Aktif Kullanıcı: 4:12 Aktif Şirket No:122 Aktif Kullanıcı: 4:12 Aktif Şirket No:122 Aktif Kullanıcı: 4:12 Aktif Şirket No:122 1:22 4:1</span>
        <div className="absolute left-[1823px] top-0 w-[9px] h-[1px] bg-[#bbb]" />
        <div className="absolute left-[1882px] top-0 w-[10px] h-[1px] bg-[#bbb]" />
      </div>
      {/* menu */}
      <div className="h-[26px] flex items-center pl-[4px] border-b border-[#a8a8a8] text-[14px] text-[#1c2230]">
        {menu.map((m) => (
          <div key={m.t} className={"flex items-center shrink-0 " + m.w}>
            {m.icon}
            {m.n && <span className="ml-[5px] w-[22px] shrink-0">{m.n}</span>}
            <span className={(m.n ? "" : "ml-[5px] ") + "whitespace-nowrap"}>{m.t}</span>
          </div>
        ))}
      </div>
      {/* mdi client */}
      <div className="flex h-[883px]">
        <div className="w-[11px] shrink-0 pt-[319px]">
          <div className="w-[9px] h-[271px] ml-px border border-[#b0b0b0] bg-gradient-to-r from-white via-white to-[#a9c8dc] flex items-center">
            <svg width="7" height="10" viewBox="0 0 7 10" className="ml-px"><path d="M1 1l4 4-4 4" fill="none" stroke="#000" strokeWidth="1.800" /></svg>
          </div>
        </div>
        <div className="flex-1 mt-[2px] border-t-[3px] border-l-2 border-[#808080]" />
      </div>

      <Beyanname />
      <EFatura />

      {/* red marks over the picture */}
      <div className="absolute left-[140px] top-[154px] w-[104px] h-[37px] border-[4px] border-[#ff0000] rounded-[2px]" />
      <div className="absolute left-[939px] top-[326px] w-[126px] h-[40px] border-[4px] border-[#ff0000] rounded-[2px]" />
      <div className="absolute left-[1010px] top-[344px] w-[11px] h-[7px] bg-[#ff0000] rounded-[3px]" />
      <div className="absolute left-[1507px] top-[809px] w-[157px] h-[48px] border-[4px] border-[#ff0000] rounded-[2px]" />
    </div>
  );
}
